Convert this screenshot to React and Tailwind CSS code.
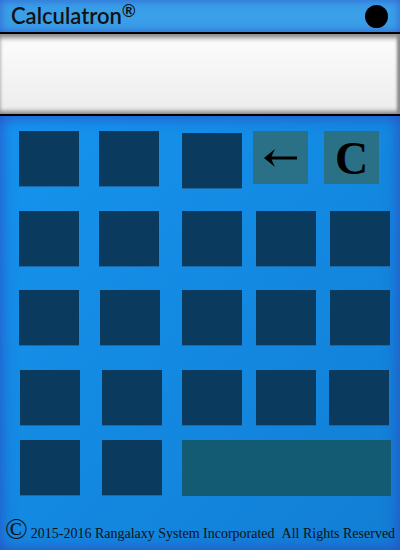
const ROWS = [
  {
    top: 'mt-[15px]',
    keys: [
      { ml: 'ml-[19px]', kind: 'dark' },
      { ml: 'ml-[20px]', kind: 'dark' },
      { ml: 'ml-[23px]', kind: 'dark', extra: 'mt-[2px]' },
      { ml: 'ml-[11px]', kind: 'back' },
      { ml: 'ml-[16px]', kind: 'clear' },
    ],
  },
  {
    top: 'mt-[22px]',
    keys: [
      { ml: 'ml-[19px]', kind: 'dark' },
      { ml: 'ml-[20px]', kind: 'dark' },
      { ml: 'ml-[23px]', kind: 'dark' },
      { ml: 'ml-[14px]', kind: 'dark' },
      { ml: 'ml-[14px]', kind: 'dark' },
    ],
  },
  {
    top: 'mt-[23px]',
    keys: [
      { ml: 'ml-[19px]', kind: 'dark' },
      { ml: 'ml-[21px]', kind: 'dark' },
      { ml: 'ml-[22px]', kind: 'dark' },
      { ml: 'ml-[14px]', kind: 'dark' },
      { ml: 'ml-[14px]', kind: 'dark' },
    ],
  },
  {
    top: 'mt-[24px]',
    keys: [
      { ml: 'ml-[20px]', kind: 'dark' },
      { ml: 'ml-[22px]', kind: 'dark' },
      { ml: 'ml-[20px]', kind: 'dark' },
      { ml: 'ml-[14px]', kind: 'dark' },
      { ml: 'ml-[13px]', kind: 'dark' },
    ],
  },
  {
    top: 'mt-[14px]',
    keys: [
      { ml: 'ml-[20px]', kind: 'dark' },
      { ml: 'ml-[22px]', kind: 'dark' },
      { ml: 'ml-[20px]', kind: 'wide' },
    ],
  },
];

function clsx(...a) {
  return a.filter(Boolean).join(' ');
}

function Key({ k }) {
  if (k.kind === 'back') {
    return (
      <div className={`${k.ml} flex h-[53px] w-[55px] items-center justify-center bg-[#2a7086]`}>
        <svg width="34" height="20" viewBox="0 0 34 20" className="mt-[1px]">
          <path d="M0 10 L11 1 L7.5 8.6 H33 V11.4 H7.5 L11 19 Z" fill="#000" />
        </svg>
      </div>
    );
  }
  if (k.kind === 'clear') {
    return (
      <div className={`${k.ml} flex h-[53px] w-[55px] items-center justify-center bg-[#2a7086]`}>
        <span className="mt-[3px] text-[46px] font-bold leading-none text-black [font-family:'Liberation_Serif',serif]">C</span>
      </div>
    );
  }
  if (k.kind === 'wide') {
    return <div className={`${k.ml} h-[56px] w-[209px] bg-[#125b72]`} />;
  }
  return (
    <div
      className={clsx(
        k.ml,
        k.extra,
        'h-[56px] w-[60px] border-b border-[#1a6aa8] bg-[#0a3a5e]'
      )}
    />
  );
}

export default function App() {
  return (
    <div className="flex h-[550px] w-[400px] flex-col overflow-hidden bg-[#1490e8]">
      <div className="flex h-[32px] items-center justify-between bg-[#3a9fe8] pl-[11px] pr-[12px] shadow-[inset_0_0_10px_#2f5fd0]">
        <h1 className="flex items-start text-[22px] font-semibold leading-none text-[#111] [font-family:Lato,'Open_Sans',sans-serif]">
          Calculatron
          <span className="relative -top-[3px] text-[17px] leading-none">®</span>
        </h1>
        <div className="h-[23px] w-[23px] rounded-full bg-black" />
      </div>
      <div className="h-[84px] border-y-2 border-black bg-gradient-to-b from-[#fdfdfd] to-[#ececec] shadow-[inset_0_6px_5px_-2px_#8a8a8a,inset_0_-4px_4px_-1px_#8a8a8a,inset_-4px_0_3px_-1px_#8a8a8a]" />
      <div className="flex flex-1 flex-col bg-gradient-to-br from-[#1594ee] to-[#127ed4] shadow-[inset_0_0_16px_#2c49c4]">
        {ROWS.map((row, i) => (
          <div key={i} className={`${row.top} flex items-start`}>
            {row.keys.map((k, j) => (
              <Key key={j} k={k} />
            ))}
          </div>
        ))}
        <div className="mt-auto mb-[9px] flex items-end whitespace-nowrap pl-[5px] text-[#111] [font-family:'Liberation_Serif',serif]">
          <span className="text-[30px] leading-[24px]">©</span>
          <span className="ml-[3px] text-[14px] leading-none">
            2015-2016 Rangalaxy System Incorporated
          </span>
          <span className="ml-[7px] text-[14px] leading-none">All Rights Reserved</span>
        </div>
      </div>
    </div>
  );
}
